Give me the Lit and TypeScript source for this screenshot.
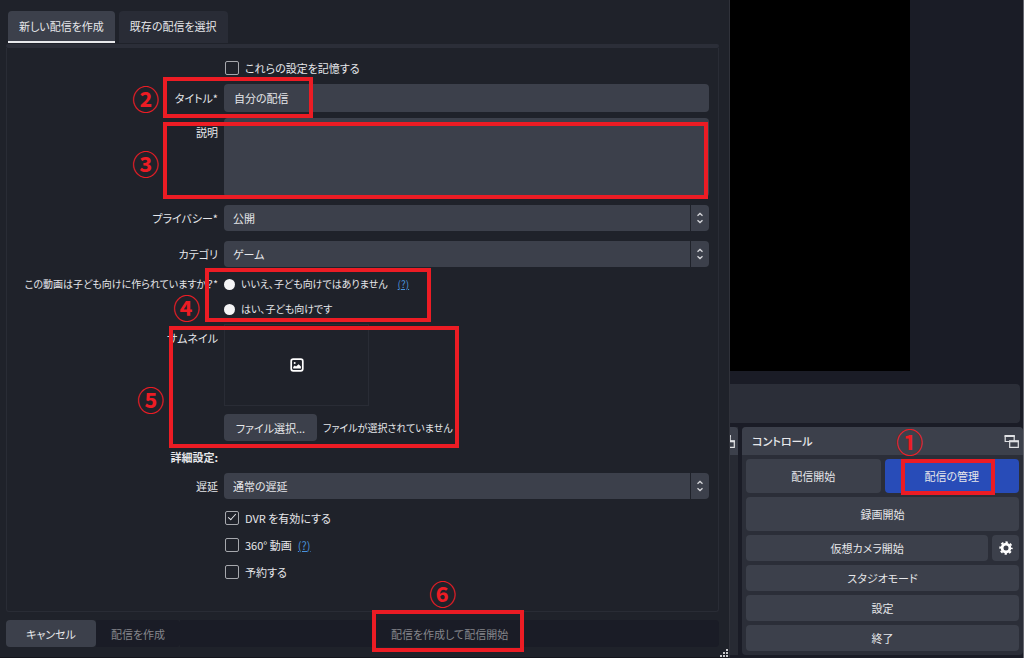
import { LitElement, html, css, svg } from "lit";
import { customElement, state } from "lit/decorators.js";

const popOut = svg`<path d="M1.2 2h9v5.5h-9z" /><path d="M.6 2h10.2" class="bar-line" /><path class="front" d="M5.7 7h8.6v6.4H5.7z" /><path d="M5.1 7.3h9.8" class="bar-line" />`;

@customElement("option-picker")
class OptionPicker extends LitElement {
  static properties = { label: {}, value: {} };
  declare label: string;
  declare value: string;

  static styles = css`
    :host { display: block; position: relative; }
    .select {
      appearance: none; display: block; box-sizing: border-box; width: 100%; height: 26px;
      margin: 0; padding: 0 26px 0 9px; border: 0; border-radius: 4px;
      background: linear-gradient(#1f222a, #1f222a) right 18px top / 1px 100% no-repeat #3c404b;
      color: #e6e7ea; font: inherit; font-feature-settings: inherit;
    }
    .arrows {
      position: absolute; right: 5px; top: 6px; width: 8px; height: 14px;
      fill: none; stroke: #d5d6da; stroke-width: 1.3; pointer-events: none;
    }
  `;

  render() {
    return html`
      <select class="select" aria-label=${this.label}><option>${this.value}</option></select>
      <svg class="arrows" viewBox="0 0 8 14"><path d="M1.5 4.8 4 2.5l2.5 2.3M1.5 9.2 4 11.5l2.5-2.3" /></svg>
    `;
  }
}

@customElement("app-root")
class AppRoot extends LitElement {
  @state() private tab = 0;

  static styles = css`
    :host {
      display: flex; min-height: 100vh; background: #1a1c26; color: #e6e7ea;
      font: 11px/18px "Noto Sans CJK JP", "Noto Sans", sans-serif;
      font-feature-settings: "palt";
    }
    button, input, textarea { font: inherit; font-feature-settings: inherit; color: inherit; }
    button { border: 0; padding: 0; border-radius: 4px; background: #3c404b; }
    .dialog {
      position: relative; flex: none; width: 71.3%; min-width: 0; box-sizing: border-box; display: flex; flex-direction: column;
      padding: 11px 10px 10px 6px; background: #1f222a; border-right: 1px solid #30323a; border-bottom: 1px solid #14151c;
    }
    .tabs { display: flex; gap: 4px; padding-left: 2px; }
    .tab { height: 32px; padding: 0 11px; border-radius: 4px 4px 0 0; background: #292c36; border-bottom: 2px solid #292c36; }
    .tab.active { background: #3c404b; border-bottom-color: #e8e9ec; }
    .bar { height: 4px; margin-top: 1px; border-radius: 2px; background: #2b2e38; }
    .form {
      flex: 1; display: flex; flex-direction: column; gap: 6px;
      padding: 9px 9px 8px 0; border: 1px solid #292c35; border-top: 0; border-radius: 0 0 3px 3px;
    }
    .row { display: grid; grid-template-columns: 211px minmax(0, 1fr); column-gap: 6px; align-items: center; }
    .row.top { align-items: start; }
    .row.padded { padding: 2px 0; }
    .name { justify-self: end; white-space: nowrap; }
    .name.low { padding-top: 5px; }
    .name.strong { font-weight: 700; line-height: 16px; }
    .dense { font-size: 10px; }
    .line { display: flex; align-items: center; gap: 6px; min-height: 21px; }
    .radios { display: grid; gap: 7px; }
    .radio-line { display: flex; align-items: center; gap: 6px; height: 18px; }
    .text { box-sizing: border-box; width: 100%; height: 28px; padding: 0 10px; border: 0; border-radius: 4px; background: #3c404b; }
    .area { display: block; box-sizing: border-box; width: 100%; height: 79px; border: 0; border-radius: 4px; background: #3c404b; resize: none; }
    .check { appearance: none; box-sizing: border-box; width: 14px; height: 14px; margin: 0 0 0 1px; border: 1px solid #a6a8ad; border-radius: 2px; display: grid; place-items: center; }
    .check:checked::before { content: ""; width: 7px; height: 3px; margin-top: -3px; border: solid #e6e7ea; border-width: 0 0 1px 1px; transform: rotate(-48deg); }
    .radio { appearance: none; width: 11px; height: 11px; margin: 0; border-radius: 50%; background: #f4f4f5; }
    .help { color: #4a92dc; text-decoration: underline; }
    .radio-line .help { margin-left: 4px; }
    .thumb { box-sizing: border-box; width: 145px; height: 82px; border: 1px solid #292c35; display: grid; place-items: center; }
    .picture { width: 14px; height: 14px; }
    .file { display: flex; align-items: center; gap: 6px; }
    .pick { width: 93px; height: 27px; }
    .actions { display: flex; margin-top: 8px; }
    .actions button { height: 27px; }
    .cancel { width: 90px; }
    .actions .off { background: #1a1c26; color: #85868b; border-radius: 0 4px 4px 0; }
    .create { width: 84px; }
    .actions .start { flex: 1; }
    .grip { position: absolute; right: 1px; bottom: 0; width: 8px; height: 8px; fill: #c9cacd; }

    .main { position: relative; flex: 1; min-width: 0; display: flex; flex-direction: column; border-right: 1px solid #666870; }
    .preview { width: 61.5%; height: 371px; background: #000; }
    .status { height: 39px; margin: 13px 3px 4px 0; border-radius: 0 4px 4px 0; background: #2b2e38; }
    .docks { flex: 1; display: flex; gap: 4px; padding-bottom: 3px; }
    .sliver { width: 8px; background: #272a33; overflow: hidden; }
    .sliver-head { height: 28px; background: #3c404b; border-radius: 0 4px 0 0; display: flex; justify-content: flex-end; align-items: center; padding-right: 3px; }
    .dock { flex: 1; min-width: 0; background: #2b2e38; border-radius: 4px; }
    .dock-head { display: flex; align-items: center; justify-content: space-between; height: 28px; padding: 0 4px 0 10px; background: #3c404b; border-radius: 4px 4px 0 0; }
    .dock-title { margin: 0; font-size: 11px; font-weight: 500; }
    .pop { flex: none; width: 15px; height: 15px; fill: none; stroke: #e0e1e4; stroke-width: 1.2; }
    .pop .front { fill: #3c404b; }
    .pop .bar-line { stroke-width: 2; }
    .controls { display: grid; grid-template-columns: 1fr 1fr; gap: 4px; padding: 4px; }
    .controls button { height: 26px; }
    .controls .tall { height: 34px; }
    .controls .primary { background: #284cb8; }
    .wide { grid-column: 1 / -1; }
    .pair { display: grid; grid-template-columns: 1fr 27px; gap: 4px; }
    .gear-button { display: grid; place-items: center; }
    .gear { width: 14px; height: 14px; }

    .mark { position: absolute; box-sizing: border-box; border: 4px solid #ec1c24; pointer-events: none; }
    .num {
      position: absolute; width: 27px; height: 27px;
      color: #ec1c24; font-size: 27px; line-height: 27px; font-weight: 700; text-align: center; pointer-events: none;
    }
    .m2 { left: 163px; top: 77px; width: 150px; height: 41px; }
    .m3 { left: 163px; top: 122px; right: 21px; height: 77px; }
    .m4 { left: 205px; top: 268px; width: 226px; height: 54px; }
    .m5 { left: 169px; top: 326px; width: 290px; height: 122px; }
    .m6 { left: 372px; top: 610px; width: 152px; height: 42px; }
    .m1 { left: 171px; top: 459px; width: 94px; height: 36px; }
    .n2 { left: 132px; top: 85px; }
    .n3 { left: 132px; top: 150px; }
    .n4 { left: 173px; top: 294px; }
    .n5 { left: 137px; top: 386px; }
    .n6 { left: 429px; top: 580px; }
    .n1 { left: 166px; top: 428px; }
  `;

  render() {
    return html`
      <section class="dialog">
        <div class="tabs" role="tablist">
          ${["新しい配信を作成", "既存の配信を選択"].map((t, i) => html`
            <button class="tab ${this.tab === i ? "active" : ""}" role="tab" @click=${() => (this.tab = i)}>${t}</button>`)}
        </div>
        <div class="bar"></div>
        <form class="form">
          <div class="row"><span></span>
            <div class="line"><input class="check" type="checkbox" id="remember"><label for="remember">これらの設定を記憶する</label></div>
          </div>
          <div class="row"><label class="name" for="title">タイトル*</label><input class="text" id="title" value="自分の配信"></div>
          <div class="row top"><label class="name low" for="desc">説明</label><textarea class="area" id="desc"></textarea></div>
          <div class="row padded"><span class="name">プライバシー*</span><option-picker label="プライバシー" value="公開"></option-picker></div>
          <div class="row padded"><span class="name">カテゴリ</span><option-picker label="カテゴリ" value="ゲーム"></option-picker></div>
          <div class="row top"><span class="name dense">この動画は子ども向けに作られていますか？*</span>
            <div class="radios dense">
              <div class="radio-line"><input class="radio" type="radio" name="kids" id="no"><label for="no">いいえ、子ども向けではありません</label><a class="help" href="#">(?)</a></div>
              <div class="radio-line"><input class="radio" type="radio" name="kids" id="yes"><label for="yes">はい、子ども向けです</label></div>
            </div>
          </div>
          <div class="row top"><span class="name low">サムネイル</span>
            <div class="thumb"><svg class="picture" viewBox="0 0 14 14"><rect x="1.2" y="1.2" width="11.6" height="11.6" rx="2" fill="none" stroke="#fff" stroke-width="1.7" /><circle cx="4.7" cy="5" r="1" fill="#fff" /><path d="M3.2 10.5V9l1.6-1.4 1.2 1 2.6-2.4 2.3 2.4v1.9z" fill="#fff" /></svg></div>
          </div>
          <div class="row padded"><span></span>
            <div class="file"><button class="pick" type="button">ファイル選択...</button><span class="dense">ファイルが選択されていません</span></div>
          </div>
          <div class="row"><span class="name strong">詳細設定:</span></div>
          <div class="row padded"><span class="name">遅延</span><option-picker label="遅延" value="通常の遅延"></option-picker></div>
          <div class="row"><span></span>
            <div class="line"><input class="check" type="checkbox" id="dvr" checked><label for="dvr">DVR を有効にする</label></div>
          </div>
          <div class="row"><span></span>
            <div class="line"><input class="check" type="checkbox" id="v360"><label for="v360">360° 動画</label><a class="help" href="#">(?)</a></div>
          </div>
          <div class="row"><span></span>
            <div class="line"><input class="check" type="checkbox" id="plan"><label for="plan">予約する</label></div>
          </div>
        </form>
        <div class="actions">
          <button class="cancel">キャンセル</button>
          <button class="off create" disabled>配信を作成</button>
          <button class="off start" disabled>配信を作成して配信開始</button>
        </div>
        <svg class="grip" viewBox="0 0 8 8"><path d="M6 0h2v2H6zM3 3h2v2H3zM6 3h2v2H6zM0 6h2v2H0zM3 6h2v2H3zM6 6h2v2H6z" /></svg>
        <div class="mark m2"></div><div class="mark m3"></div><div class="mark m4"></div><div class="mark m5"></div><div class="mark m6"></div>
        ${["②", "③", "④", "⑤", "⑥"].map((n, i) => html`<span class="num n${i + 2}">${n}</span>`)}
      </section>
      <main class="main">
        <div class="preview"></div>
        <div class="status"></div>
        <div class="docks">
          <div class="sliver"><div class="sliver-head"><svg class="pop" viewBox="0 0 15 15">${popOut}</svg></div></div>
          <section class="dock">
            <header class="dock-head"><h2 class="dock-title">コントロール</h2><svg class="pop" viewBox="0 0 15 15">${popOut}</svg></header>
            <div class="controls">
              <button class="tall">配信開始</button>
              <button class="tall primary">配信の管理</button>
              <button class="tall wide">録画開始</button>
              <div class="wide pair">
                <button>仮想カメラ開始</button>
                <button class="gear-button" aria-label="設定"><svg class="gear" viewBox="0 0 14 14"><circle cx="7" cy="7" r="3.9" fill="none" stroke="#fff" stroke-width="2.8" /><circle cx="7" cy="7" r="5.8" fill="none" stroke="#fff" stroke-width="1.8" stroke-dasharray="2.4 2.155" stroke-dashoffset="1.2" /></svg></button>
              </div>
              <button class="wide">スタジオモード</button>
              <button class="wide">設定</button>
              <button class="wide">終了</button>
            </div>
          </section>
        </div>
        <div class="mark m1"></div><span class="num n1">①</span>
      </main>
    `;
  }
}
